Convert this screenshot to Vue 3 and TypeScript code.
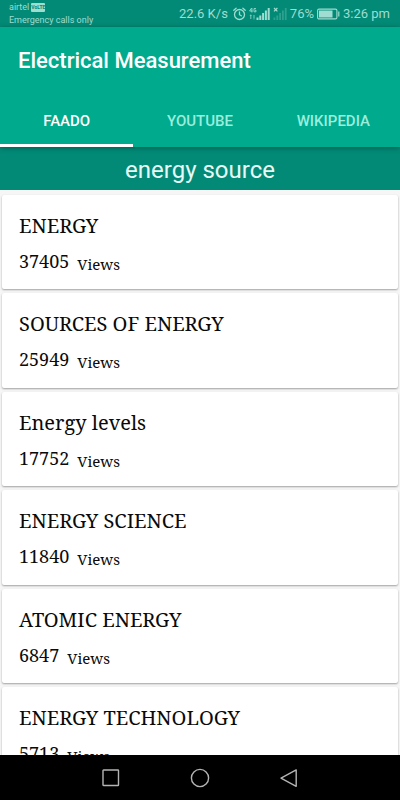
<script setup lang="ts">
import { ref } from 'vue'

interface Topic {
  title: string
  views: number
}

const tabs: string[] = ['FAADO', 'YOUTUBE', 'WIKIPEDIA']
const activeTab = ref<string>('FAADO')

const topics: Topic[] = [
  { title: 'ENERGY', views: 37405 },
  { title: 'SOURCES OF ENERGY', views: 25949 },
  { title: 'Energy levels', views: 17752 },
  { title: 'ENERGY SCIENCE', views: 11840 },
  { title: 'ATOMIC ENERGY', views: 6847 },
  { title: 'ENERGY TECHNOLOGY', views: 5713 },
]
</script>

<template>
  <div class="screen">
    <div class="status">
      <div class="carrier">
        <div class="operator">
          <span>airtel</span>
          <span class="volte">VoLTE</span>
        </div>
        <div>Emergency calls only</div>
      </div>
      <div class="indicators">
        <span class="speed">22.6 K/s</span>
        <svg width="13" height="14" viewBox="0 0 13 14" fill="none" stroke="currentColor" stroke-width="1.3" stroke-linecap="round">
          <circle cx="6.5" cy="7.5" r="5" />
          <path d="M6.5 4.8v2.9l1.8 1.1M.8 3.3 3.1 1.3M12.2 3.3 9.9 1.3" />
        </svg>
        <svg width="21" height="14" viewBox="0 0 21 14" fill="currentColor">
          <path d="M2.6 1 .6 4h3M2.9 1v4.5M7 1.6H5v3.2h2V3.3H6" fill="none" stroke="currentColor" stroke-width=".9" />
          <path d="M1.3 8h1v4h-1zM.6 9l1.2-1.7L3 9zM4.5 8h1v4h-1zM3.8 11 5 12.7 6.2 11z" opacity=".8" />
          <path d="M7.5 10.5h2V13h-2zM10.3 8.5h2V13h-2zM13.1 6h2v7h-2zM15.9 3.5h2V13h-2zM18.7 1h2v12h-2z" />
        </svg>
        <svg width="14" height="14" viewBox="0 0 14 14" fill="currentColor">
          <path d="m1 1 3.4 3.4M4.4 1 1 4.4" stroke="currentColor" stroke-width="1.2" />
          <path d="M.5 10.5h1.8V13H.5zM3.4 8.5h1.8V13H3.4zM6.2 6H8v7H6.2zM9 3.5h1.8V13H9zM11.8 1h1.8v12h-1.8z" opacity=".28" />
        </svg>
        <span>76%</span>
        <svg width="23" height="12" viewBox="0 0 23 12">
          <rect x=".6" y="1.1" width="19.3" height="9.8" rx="1.4" fill="none" stroke="currentColor" stroke-width="1.1" />
          <path d="M2 2.5H15.5v7H2zM21.2 3.5h1.2v5h-1.2z" fill="currentColor" />
        </svg>
        <span>3:26 pm</span>
      </div>
    </div>

    <header class="appbar">
      <h1>Electrical Measurement</h1>
      <nav class="tabs">
        <button
          v-for="tab in tabs"
          :key="tab"
          type="button"
          class="tab"
          :class="{ active: tab === activeTab }"
          @click="activeTab = tab"
        >{{ tab }}</button>
      </nav>
    </header>

    <h2 class="query">energy source</h2>

    <main class="content">
      <ul class="list">
        <li v-for="topic in topics" :key="topic.title" class="card">
          <div class="title">{{ topic.title }}</div>
          <div class="meta">
            <span class="count">{{ topic.views }}</span>
            <span class="label">Views</span>
          </div>
        </li>
      </ul>
    </main>

    <footer class="navbar">
      <button type="button" aria-label="Recent apps">
        <svg width="20" height="20" viewBox="0 0 20 20"><rect x="2" y="2" width="15.5" height="15.5" rx=".6" /></svg>
      </button>
      <button type="button" aria-label="Home">
        <svg width="20" height="20" viewBox="0 0 20 20"><circle cx="10" cy="10" r="8.6" /></svg>
      </button>
      <button type="button" aria-label="Back">
        <svg width="20" height="20" viewBox="0 0 20 20"><path d="M17.2 1.9v16.4L2 10.1z" /></svg>
      </button>
    </footer>
  </div>
</template>

<style>
body {
  margin: 0;
}
</style>

<style scoped>
.screen {
  display: flex;
  flex-direction: column;
  height: 100vh;
  overflow: hidden;
  background: #f6f6f6;
  font-family: Roboto, "Liberation Sans", sans-serif;
}
.status {
  display: flex;
  justify-content: space-between;
  flex: none;
  height: 27px;
  padding: 0 10px 0 9px;
  background: #028a76;
  color: #9fdcd1;
}
.carrier {
  padding-top: 1px;
  font-size: 9px;
  line-height: 13px;
}
.operator {
  display: flex;
  align-items: center;
  gap: 2px;
}
.volte {
  border-radius: 1px;
  background: #9fdcd1;
  color: #028a76;
  font-size: 5px;
  font-weight: 700;
  line-height: 9px;
}
.indicators {
  display: flex;
  align-items: center;
  gap: 3px;
  font-size: 13px;
}
.speed {
  padding-right: 2px;
}
.appbar {
  flex: none;
  position: relative;
  background: #00aa8d;
  color: #fff;
  box-shadow: 0 1px 5px rgba(0, 0, 0, 0.35);
}
h1 {
  margin: 0;
  padding: 0 18px;
  font-size: 22px;
  font-weight: 500;
  line-height: 67px;
}
.tabs {
  display: grid;
  grid-template-columns: repeat(3, 1fr);
}
.tab {
  height: 53px;
  padding: 3px 0 0;
  border: 0;
  border-bottom: 3px solid transparent;
  background: none;
  color: #99eedd;
  font: 500 15px Roboto, "Liberation Sans", sans-serif;
}
.tab.active {
  border-color: #fff;
  color: #fff;
}
.query {
  flex: none;
  margin: 0;
  padding-top: 3px;
  background: #028a76;
  color: #e6faf6;
  font-size: 24px;
  font-weight: 400;
  line-height: 40px;
  text-align: center;
}
.content {
  flex: 1;
  min-height: 0;
  overflow: hidden;
}
.list {
  display: flex;
  flex-direction: column;
  gap: 4px;
  margin: 0;
  padding: 5px 2px;
  list-style: none;
}
.card {
  padding: 18px 17px 16px;
  border-radius: 2px;
  background: #fff;
  box-shadow: 0 1px 2px rgba(0, 0, 0, 0.35);
  color: #0a0a0a;
  font-family: "Noto Serif", "DejaVu Serif Condensed", "DejaVu Serif", serif;
}
.title {
  margin-bottom: 11px;
  font-size: 20px;
  line-height: 26px;
}
.meta {
  display: flex;
  gap: 8px;
  line-height: 1.3;
  font-size: 18px;
}
.label {
  padding-top: 5px;
  font-size: 15px;
  line-height: 18px;
}
.navbar {
  display: flex;
  justify-content: center;
  gap: 69px;
  flex: none;
  height: 45px;
  background: #000;
}
.navbar button {
  display: flex;
  align-items: center;
  padding: 0;
  border: 0;
  background: none;
}
.navbar svg {
  fill: none;
  stroke: #b4b4b4;
  stroke-width: 1.4;
  stroke-linejoin: round;
}
</style>
